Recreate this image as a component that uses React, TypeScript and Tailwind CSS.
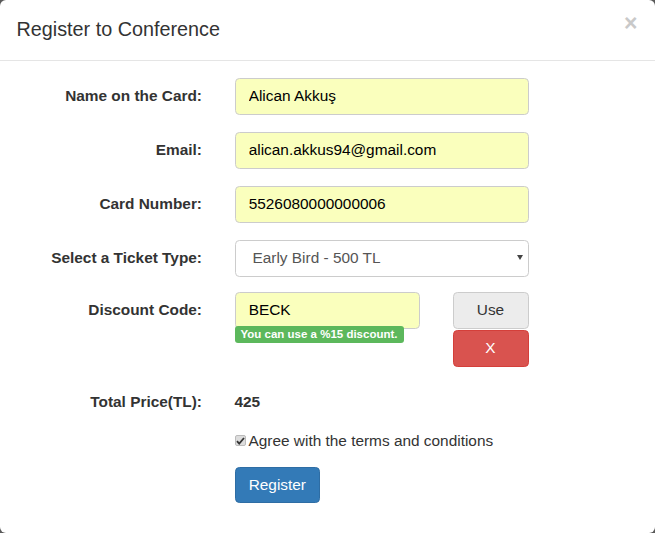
import { useState } from 'react';

const Field = ({
  label,
  children,
  className = '',
}: {
  label: string;
  children: React.ReactNode;
  className?: string;
}) => (
  <div className={'mb-[17px] flex ' + className}>
    <label className="w-[218px] shrink-0 pr-[16px] pt-[7.7px] text-right font-bold leading-[22px]">
      {label}
    </label>
    <div className="ml-[16.5px]">{children}</div>
  </div>
);

const inputCls =
  'block h-[37px] w-[294px] rounded-[4.4px] border border-[#ccc] bg-[#faffbd] px-[13.2px] text-[15.4px] text-black outline-none';

const App = () => {
  const [agree, setAgree] = useState(true);

  return (
    <div className="min-h-screen bg-[#5a5a5a] font-['Liberation_Sans',Arial,sans-serif] text-[15.4px] text-[#333]">
      <div className="h-[533px] overflow-hidden rounded-[6px] bg-white">
        <header className="flex h-[61px] items-start justify-between border-b border-[#e5e5e5] px-[16.5px]">
          <h4 className="pt-[15px] text-[19.8px] leading-[28px]">Register to Conference</h4>
          <button
            type="button"
            className="mr-[1px] mt-[9px] text-[23px] font-bold leading-[28px] text-[#c9c9c9]"
          >
            ×
          </button>
        </header>

        <form className="px-[16.5px] pt-[16.5px]" onSubmit={(e) => e.preventDefault()}>
          <div className="-mx-[16.5px]">
            <Field label="Name on the Card:">
              <input className={inputCls} defaultValue="Alican Akkuş" />
            </Field>
            <Field label="Email:">
              <input className={inputCls} defaultValue="alican.akkus94@gmail.com" />
            </Field>
            <Field label="Card Number:">
              <input className={inputCls} defaultValue="5526080000000006" />
            </Field>
            <Field label="Select a Ticket Type:" className="!mb-[15px]">
              <div className="relative w-[294px]">
                <select
                  className="block h-[37px] w-full appearance-none rounded-[4.4px] border border-[#ccc] bg-white pl-[17px] text-[15.4px] text-[#555] outline-none"
                  defaultValue="early"
                >
                  <option value="early">Early Bird - 500 TL</option>
                  <option value="regular">Regular - 750 TL</option>
                </select>
                <svg
                  className="pointer-events-none absolute right-[6px] top-[15px]"
                  width="6"
                  height="5"
                  viewBox="0 0 6 5"
                >
                  <path d="M0 0h6L3 5z" fill="#444" />
                </svg>
              </div>
            </Field>

            <Field label="Discount Code:" className="!mb-[16.5px]">
              <div className="flex">
                <div className="w-[185px]">
                  <input className={inputCls + ' !w-[185px]'} defaultValue="BECK" />
                  <span className="-mt-[3px] block w-fit rounded-[3px] bg-[#5cb85c] px-[6px] pb-[2px] pt-[1px] text-[11.5px] font-bold leading-[14px] text-white">
                    You can use a %15 discount.
                  </span>
                </div>
                <div className="ml-[33px] flex w-[76px] flex-col gap-[1px]">
                  <button
                    type="button"
                    className="h-[37px] rounded-[4.4px] border border-[#ccc] bg-[#ececec] text-[15.4px] text-[#333]"
                  >
                    Use
                  </button>
                  <button
                    type="button"
                    className="h-[37px] rounded-[4.4px] border border-[#d43f3a] bg-[#d9534f] text-[15.4px] text-white"
                  >
                    X
                  </button>
                </div>
              </div>
            </Field>

            <div className="flex">
              <label className="w-[218px] shrink-0 pr-[16px] pt-[7.7px] text-right font-bold leading-[22px]">
                Total Price(TL):
              </label>
              <div className="ml-[16.5px] pt-[7.7px] font-bold leading-[22px]">425</div>
            </div>

            <div className="ml-[234.5px] mt-[17px]">
              <label className="flex items-center leading-[22px]" onClick={() => setAgree(!agree)}>
                <span className="mr-[3px] flex h-[11px] w-[11px] items-center justify-center rounded-[2px] border border-[#bbb] bg-[#ddd]">
                  {agree && (
                    <svg width="9" height="8" viewBox="0 0 9 8">
                      <path d="M1 4.2l2.2 2.4L8 1" stroke="#333" strokeWidth="1.8" fill="none" />
                    </svg>
                  )}
                </span>
                Agree with the terms and conditions
              </label>
              <button
                type="submit"
                className="mt-[15px] h-[36px] rounded-[4.4px] border border-[#2e6da4] bg-[#337ab7] px-[13.2px] text-[15.4px] text-white"
              >
                Register
              </button>
            </div>
          </div>
        </form>
      </div>
    </div>
  );
};

export default App;
